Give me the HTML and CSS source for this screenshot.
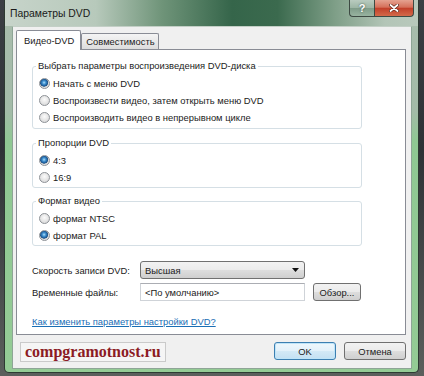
FILE: index.html
```html
<!DOCTYPE html>
<html>

<head>
  <meta charset="UTF-8">
  <title>Параметры DVD</title>
  <link rel="stylesheet" href="styles.css">
</head>

<body>

  <div class="window">
    <div class="titlebar">
      <span class="title">Параметры DVD</span>
      <div class="caption-buttons">
        <span class="cap-btn help">?</span>
        <span class="cap-btn close">
          <svg width="10" height="8" viewBox="0 0 10 8">
            <path d="M1.5 1 L8.5 7 M8.5 1 L1.5 7" stroke="#5a2418" stroke-width="3.2" stroke-linecap="round" />
            <path d="M1.5 1 L8.5 7 M8.5 1 L1.5 7" stroke="#ffffff" stroke-width="1.8" stroke-linecap="round" />
          </svg>
        </span>
      </div>
    </div>

    <div class="client">
      <div class="tabs">
        <div class="tab active">Видео-DVD</div>
        <div class="tab">Совместимость</div>
      </div>

      <div class="panel">
        <fieldset class="group">
          <legend>Выбрать параметры воспроизведения DVD-диска</legend>
          <div class="option"><span class="radio checked"></span>Начать с меню DVD</div>
          <div class="option"><span class="radio"></span>Воспроизвести видео, затем открыть меню DVD</div>
          <div class="option"><span class="radio"></span>Воспроизводить видео в непрерывном цикле</div>
        </fieldset>

        <fieldset class="group">
          <legend>Пропорции DVD</legend>
          <div class="option"><span class="radio checked"></span>4:3</div>
          <div class="option"><span class="radio"></span>16:9</div>
        </fieldset>

        <fieldset class="group">
          <legend>Формат видео</legend>
          <div class="option"><span class="radio"></span>формат NTSC</div>
          <div class="option"><span class="radio checked"></span>формат PAL</div>
        </fieldset>

        <div class="field-row first">
          <span class="field-label">Скорость записи DVD:</span>
          <div class="combo">
            <span>Высшая</span>
            <svg width="7" height="4" viewBox="0 0 7 4">
              <path d="M0 0 H7 L3.5 4 Z" fill="#111" />
            </svg>
          </div>
        </div>

        <div class="field-row">
          <span class="field-label">Временные файлы:</span>
          <div class="textbox">&lt;По умолчанию&gt;</div>
          <div class="btn browse">Обзор...</div>
        </div>

        <a class="help-link">Как изменить параметры настройки DVD?</a>
      </div>

      <div class="footer">
        <div class="watermark">compgramotnost.ru</div>
        <div class="btn default">OK</div>
        <div class="btn">Отмена</div>
      </div>
    </div>
  </div>

</body>

</html>
```

FILE: styles.css
```css
body {
  margin: 0;
  width: 424px;
  height: 376px;
  overflow: hidden;
  background: linear-gradient(to bottom, #3b3f44 0%, #2e3236 40%, #5b5f5c 100%);
  font-family: "Liberation Sans", Arial, sans-serif;
  font-size: 9.4px;
  color: #1b1b1b;
}

.window {
  margin-left: 4px;
  width: 415px;
  height: 373px;
  box-sizing: border-box;
  display: flex;
  flex-direction: column;
  border: 1px solid #2d3a32;
  border-top: none;
  border-radius: 0 0 5px 5px;
  background: linear-gradient(to bottom, #a9bdad 0%, #a3bba8 30%, #8fc893 38%, #94cb95 100%);
}

/* заголовок окна */
.titlebar {
  height: 26px;
  display: flex;
  align-items: flex-start;
  background: linear-gradient(90deg, #c7d4ca 0%, #b7c9bb 22%, #6f9479 38%, #35654a 55%, #3b6a4e 66%, #7f9f88 80%, #b3c5b7 92%, #b9c9bc 100%);
}

.title {
  margin: 8px 0 0 5px;
  font-size: 10.4px;
  color: #1a1a1a;
}

.caption-buttons {
  display: flex;
  margin-left: auto;
  margin-right: 4px;
}

.cap-btn {
  height: 17px;
  box-sizing: border-box;
  display: flex;
  align-items: center;
  justify-content: center;
  border: 1px solid #3d4a43;
  border-top: none;
}

.help {
  width: 25px;
  border-right: none;
  border-radius: 0 0 0 4px;
  background: linear-gradient(to bottom, #b9cbbf 0%, #9cb5a4 50%, #7f9c89 52%, #98b3a0 100%);
  color: #ffffff;
  font-weight: bold;
  font-size: 11px;
  text-shadow: 0 0 2px #33443a;
}

.close {
  width: 40px;
  border-radius: 0 0 4px 0;
  background: linear-gradient(to bottom, #e5a290 0%, #d5705a 45%, #c2402a 52%, #d36a4a 100%);
}

/* клиентская область */
.client {
  flex: 1;
  margin: 0 6px 3px 7px;
  padding: 3px 5px 0 3px;
  display: flex;
  flex-direction: column;
  background: #f0f0f0;
  border: 1px solid #8ea596;
  border-top-color: #c3cfc6;
}

.tabs {
  height: 19px;
  display: flex;
  align-items: flex-end;
}

.tab {
  height: 16px;
  box-sizing: border-box;
  padding: 0 3px 0 4px;
  display: flex;
  align-items: center;
  border: 1px solid #898c95;
  border-bottom: none;
  border-radius: 2px 2px 0 0;
  background: linear-gradient(to bottom, #f4f4f4 0%, #e9e9e9 50%, #dcdcdc 100%);
}

.tab.active {
  height: 20px;
  margin-bottom: -1px;
  padding: 0 6px 0 7px;
  background: #ffffff;
  position: relative;
  z-index: 1;
}

.panel {
  padding: 9px 0 5px 15px;
  display: flex;
  flex-direction: column;
  align-items: flex-start;
  background: #ffffff;
  border: 1px solid #898c95;
}

.group {
  width: 330px;
  box-sizing: border-box;
  margin: 7px 0 0;
  padding: 2px 0 1px 6px;
  border: 1px solid #d5dfe5;
  border-radius: 3px;
}

.group:first-child {
  margin-top: 0;
  padding-bottom: 2px;
}

.group + .group + .group {
  margin-top: 6px;
}

.group legend {
  margin-left: -3px;
  padding: 0 2px;
  line-height: 14px;
}

.option {
  height: 17px;
  display: flex;
  align-items: center;
  gap: 3px;
}

.radio {
  width: 11px;
  height: 11px;
  box-sizing: border-box;
  border-radius: 50%;
  border: 1px solid #8d9196;
  background: radial-gradient(circle at 50% 40%, #fbfbfb 0%, #e6e6e6 50%, #cfd0d2 100%);
}

.radio.checked {
  background: radial-gradient(circle at 45% 40%, #b7e2fb 0, #4a9ad6 1.5px, #1d5f9e 3.2px, #2a5783 3.8px, #d9dadc 4.3px, #eeeeee 100%);
}

.field-row {
  height: 18px;
  margin-top: 4px;
  display: flex;
  align-items: center;
}

.field-row.first {
  margin-top: 15px;
}

.field-label {
  width: 108px;
}

.combo {
  width: 165px;
  height: 18px;
  box-sizing: border-box;
  padding: 0 5px 0 4px;
  display: flex;
  align-items: center;
  justify-content: space-between;
  border: 1px solid #707070;
  border-radius: 3px;
  background: linear-gradient(to bottom, #f2f2f2 0%, #ebebeb 48%, #dddddd 52%, #cfcfcf 100%);
}

.textbox {
  width: 165px;
  height: 18px;
  box-sizing: border-box;
  padding: 0 4px;
  display: flex;
  align-items: center;
  border: 1px solid #cfd3d8;
  border-top-color: #abadb3;
  background: #ffffff;
}

.btn {
  width: 62px;
  height: 18px;
  box-sizing: border-box;
  display: flex;
  align-items: center;
  justify-content: center;
  border: 1px solid #707070;
  border-radius: 3px;
  background: linear-gradient(to bottom, #f2f2f2 0%, #ebebeb 48%, #dddddd 52%, #cfcfcf 100%);
}

.btn.browse {
  width: 48px;
  margin-left: 8px;
}

.help-link {
  margin-top: 14px;
  line-height: 14px;
  color: #1a6eb5;
  text-decoration: underline;
  cursor: pointer;
}

.footer {
  padding: 7px 0 0 4px;
  display: flex;
  align-items: flex-start;
  gap: 8px;
}

.watermark {
  margin-right: auto;
  padding: 0 4px;
  line-height: 18px;
  font-family: "Liberation Serif", "Times New Roman", serif;
  font-weight: bold;
  font-size: 16px;
  color: #8c1b24;
  background: #f5f5f5;
  border: 1px solid #cacaca;
}

.btn.default {
  border-color: #3c7fb1;
  background: linear-gradient(to bottom, #eef7fc 0%, #e3f1fa 48%, #d3e9f6 52%, #c4e0f2 100%);
  box-shadow: inset 0 0 0 1px #bfe4f8;
}
```
